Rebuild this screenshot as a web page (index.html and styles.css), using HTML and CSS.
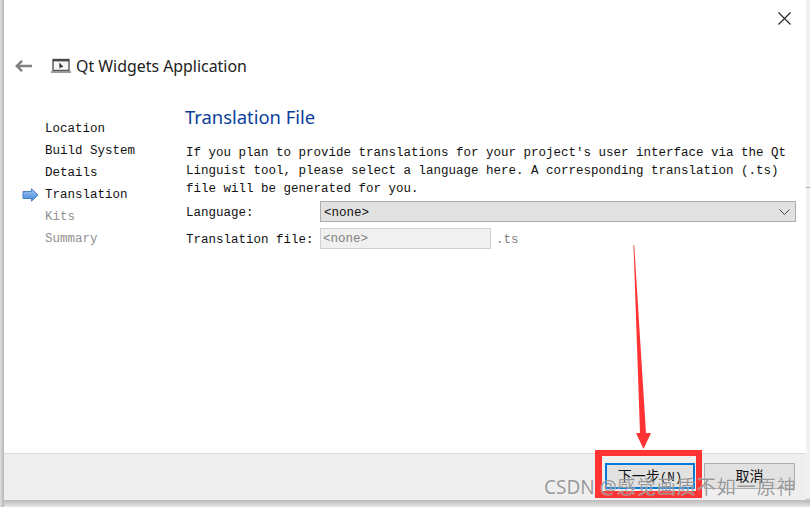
FILE: index.html
```html
<!DOCTYPE html>
<html lang="en">
<head>
<meta charset="utf-8">
<title>Qt Widgets Application</title>
<link rel="stylesheet" href="styles.css">
</head>
<body>
<div class="window">
  <div class="topbar">
    <svg class="close" width="15" height="15" viewBox="0 0 15 15"><path d="M1.5 1.5 L13.5 13.5 M13.5 1.5 L1.5 13.5" stroke="#222" stroke-width="1.1" fill="none"/></svg>
  </div>
  <div class="titlerow">
    <svg class="back" width="17" height="12" viewBox="0 0 17 12"><path d="M7 .8 L1.8 6 L7 11.2 M2 6 L17 6" stroke="#808080" stroke-width="2.4" fill="none"/></svg>
    <svg class="appicon" width="20" height="16" viewBox="0 0 20 16"><rect x="2" y="1.5" width="16" height="11" fill="#f6f6f6" stroke="#555" stroke-width="1.4"/><rect x="2" y="1" width="16" height="2.4" fill="#4a4a4a"/><rect x="0" y="13" width="20" height="2" fill="#9a9a9a"/><path d="M8.4 4.6 L8.4 10.6 L10 9.2 L12.4 9 Z" fill="#2e2e2e"/></svg>
    <span class="apptitle">Qt Widgets Application</span>
  </div>
  <div class="main">
    <ul class="steps">
      <li>Location</li>
      <li>Build System</li>
      <li>Details</li>
      <li class="current"><svg class="pointer" width="17" height="14" viewBox="0 0 17 14"><defs><linearGradient id="pg" x1="0" y1="0" x2="0" y2="1"><stop offset="0" stop-color="#a4c9f2"/><stop offset="1" stop-color="#3f84dc"/></linearGradient></defs><path d="M1 3.5 L9.5 3.5 L9.5 .8 L16 7 L9.5 13.2 L9.5 10.5 L1 10.5 Z" fill="url(#pg)" stroke="#4a7fc4" stroke-width="1"/></svg>Translation</li>
      <li class="todo">Kits</li>
      <li class="todo">Summary</li>
    </ul>
    <div class="page">
      <h1>Translation File</h1>
      <p class="intro">If you plan to provide translations for your project's user interface via the Qt<br>Linguist tool, please select a language here. A corresponding translation (.ts)<br>file will be generated for you.</p>
      <div class="field lang">
        <label class="lbl">Language:</label>
        <div class="combo"><span class="val">&lt;none&gt;</span><svg width="11" height="6" viewBox="0 0 11 6"><path d="M.5 .5 L5.5 5.5 L10.5 .5" stroke="#444" fill="none"/></svg></div>
      </div>
      <div class="field file">
        <label class="lbl">Translation file:</label>
        <div class="input">&lt;none&gt;</div>
        <span class="ext">.ts</span>
      </div>
    </div>
  </div>
  <div class="footer">
    <button class="btn primary">下一步<span class="mnemonic">(N)</span></button>
    <button class="btn">取消</button>
  </div>
</div>
<div class="redbox"></div>
<svg class="redarrow" width="24" height="205" viewBox="0 0 24 205"><polygon points="3.5,0 4.2,0 16,188 21,188 13.5,204 6,188 10,188" fill="#ff3333"/></svg>
<div class="watermark">CSDN @<span class="wm-name">感觉画质不如一原神</span></div>
<div class="edge-mark"></div>
</body>
</html>
```
FILE: styles.css
```css
* { box-sizing: border-box; }
html, body { margin: 0; padding: 0; }
body {
  width: 810px;
  height: 507px;
  overflow: hidden;
  position: relative;
  background: linear-gradient(to bottom, #f1f1f1 0, #f1f1f1 498px, #b9b9b9 500px, #e6e6e6 507px);
  font-family: "Liberation Mono", "Noto Sans CJK SC", monospace;
  font-size: 12.5px;
  color: #111;
}
body::before {
  content: "";
  position: absolute;
  left: 0; top: 0; bottom: 0;
  width: 4px;
  background: linear-gradient(to right, #e0e0e0, #b5b5b5);
}
.window {
  margin-left: 4px;
  width: 802px;
  height: 500px;
  background: #fff;
  display: flex;
  flex-direction: column;
}
.topbar {
  height: 54px;
  padding: 11px 14px 0 0;
  display: flex;
  justify-content: flex-end;
}
.titlerow {
  height: 23px;
  display: flex;
  align-items: center;
  padding-left: 11px;
}
.appicon { margin-left: 19px; }
.apptitle {
  margin-left: 5px;
  font-family: "Noto Sans", sans-serif;
  font-size: 15.9px;
  color: #222;
}
.main {
  flex: 1;
  display: flex;
  min-height: 0;
}
.steps {
  list-style: none;
  margin: 0;
  padding: 41px 0 0 41px;
  width: 181px;
}
.steps li {
  height: 22px;
  line-height: 22px;
  position: relative;
  white-space: nowrap;
}
.steps .todo { color: #8f8f8f; }
.pointer {
  position: absolute;
  left: -23px;
  top: 4px;
}
.page {
  flex: 1;
  padding: 27px 10px 0 0;
}
h1 {
  margin: 0;
  font-family: "Noto Sans", sans-serif;
  font-weight: 400;
  font-size: 18.4px;
  line-height: 26px;
  color: #0c3f9c;
}
.intro {
  margin: 14px 0 0 1px;
  line-height: 18px;
  white-space: nowrap;
}
.field {
  display: flex;
  align-items: center;
  margin-left: 1px;
}
.lang { margin-top: 3px; }
.file { margin-top: 6px; }
.lbl { width: 134px; flex: none; padding-top: 2px; }
.combo {
  flex: 1;
  height: 21px;
  background: #e1e1e1;
  border: 1px solid #adadad;
  display: flex;
  align-items: center;
  justify-content: space-between;
  padding: 0 5px 0 3px;
}
.val { padding-top: 2px; }
.input {
  width: 171px;
  height: 21px;
  line-height: 21px;
  background: #f0f0f0;
  border: 1px solid #cfcfcf;
  padding-left: 2px;
  color: #808080;
}
.ext { margin-left: 5px; padding-top: 2px; color: #808080; }
.footer {
  height: 47px;
  flex: none;
  background: #efefef;
  border-top: 1px solid #dcdcdc;
  display: flex;
  justify-content: flex-end;
  align-items: flex-start;
  gap: 9px;
  padding: 9px 11px 0 0;
}
.btn {
  width: 91px;
  height: 26px;
  background: #e1e1e1;
  border: 1px solid #adadad;
  font-family: "Noto Sans CJK SC", sans-serif;
  font-size: 14px;
  line-height: 20px;
  color: #111;
  padding: 0 0 3px;
}
.mnemonic {
  font-family: "Liberation Mono", monospace;
  font-size: 12.5px;
}
.btn.primary {
  width: 90px;
  border: 2px solid #0078d7;
}
.redbox {
  position: absolute;
  left: 595px;
  top: 450px;
  width: 107px;
  height: 48px;
  border: solid #ff3333;
  border-width: 6px 6px 7px 7px;
}
.redarrow {
  position: absolute;
  left: 630px;
  top: 245px;
}
.watermark {
  position: absolute;
  left: 544px;
  top: 475px;
  font-family: "Noto Sans", "Noto Sans CJK SC", sans-serif;
  font-size: 19px;
  line-height: 24px;
  color: rgba(125, 125, 125, .78);
  text-shadow: 0 0 1px rgba(255, 255, 255, .8);
  white-space: nowrap;
}
.wm-name { letter-spacing: 1px; }
.edge-mark {
  position: absolute;
  left: 806px;
  top: 187px;
  width: 4px;
  height: 1px;
  background: #a8a8a8;
}
```
